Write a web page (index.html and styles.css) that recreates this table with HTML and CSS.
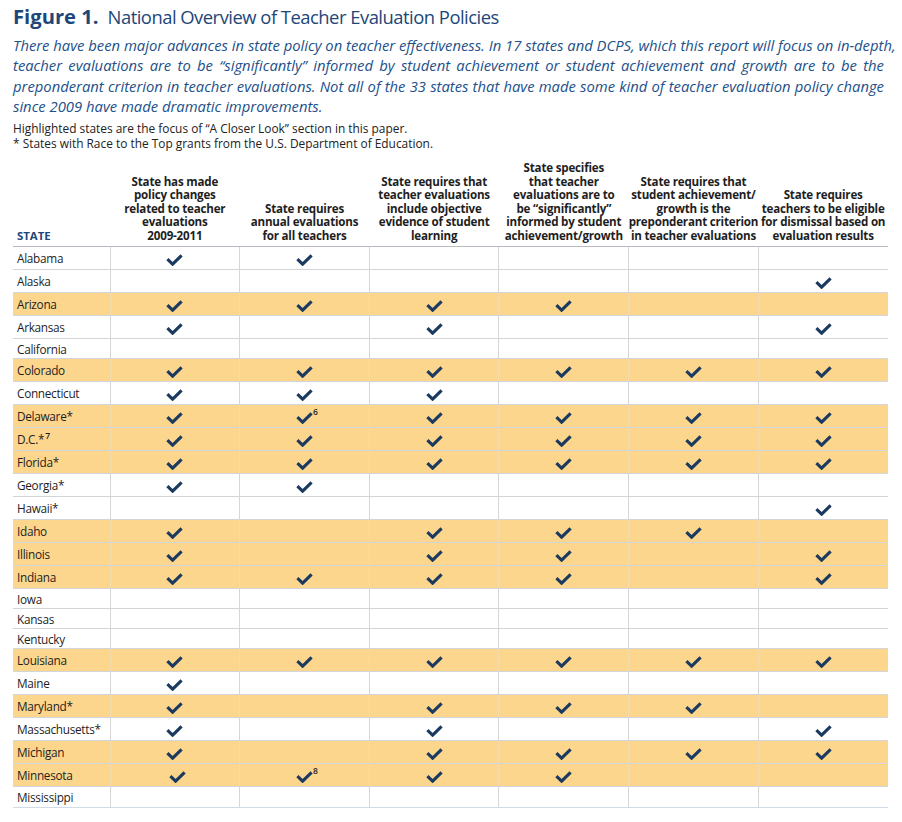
FILE: index.html
```html
<!DOCTYPE html>
<html lang="en">
<head>
<meta charset="utf-8">
<title>Figure 1. National Overview of Teacher Evaluation Policies</title>
<link rel="stylesheet" href="styles.css">
</head>
<body>
<svg class="defs" width="0" height="0" aria-hidden="true">
  <symbol id="ck" viewBox="0 0 17 12">
    <path d="M1.4 5.2 L6.6 10.2 L15.6 1.4" fill="none" stroke="#1b3a60" stroke-width="3.1" stroke-linejoin="miter"/>
  </symbol>
</svg>
<div class="page">
  <h1 class="title"><span class="fig">Figure 1.</span><span class="name">National Overview of Teacher Evaluation Policies</span></h1>
  <div class="lead">
    <span class="ln">There have been major advances in state policy on teacher effectiveness. In 17 states and DCPS, which this report will focus on in-depth,</span>
    <span class="ln">teacher evaluations are to be “significantly” informed by student achievement or student achievement and growth are to be the</span>
    <span class="ln">preponderant criterion in teacher evaluations. Not all of the 33 states that have made some kind of teacher evaluation policy change</span>
    <span class="ln last">since 2009 have made dramatic improvements.</span>
  </div>
  <div class="notes">
    <div>Highlighted states are the focus of “A Closer Look” section in this paper.</div>
    <div>* States with Race to the Top grants from the U.S. Department of Education.</div>
  </div>
  <table class="grid">
    <colgroup>
      <col class="c-state"><col class="c-q"><col class="c-q"><col class="c-q"><col class="c-q"><col class="c-q"><col class="c-q">
    </colgroup>
    <thead>
      <tr>
        <th class="st">STATE</th>
        <th>State has made<br>policy changes<br>related to teacher<br>evaluations<br>2009-2011</th>
        <th>State requires<br>annual evaluations<br>for all teachers</th>
        <th>State requires that<br>teacher evaluations<br>include objective<br>evidence of student<br>learning</th>
        <th>State specifies<br>that teacher<br>evaluations are to<br>be “significantly”<br>informed by student<br>achievement/growth</th>
        <th>State requires that<br>student achievement/<br>growth is the<br>preponderant criterion<br>in teacher evaluations</th>
        <th>State requires<br>teachers to be eligible<br>for dismissal based on<br>evaluation results</th>
      </tr>
    </thead>
    <tbody>
      <tr><td>Alabama</td><td><svg class="ck"><use href="#ck"/></svg></td><td><svg class="ck"><use href="#ck"/></svg></td><td></td><td></td><td></td><td></td></tr>
      <tr><td>Alaska</td><td></td><td></td><td></td><td></td><td></td><td><svg class="ck"><use href="#ck"/></svg></td></tr>
      <tr class="hl"><td>Arizona</td><td><svg class="ck"><use href="#ck"/></svg></td><td><svg class="ck"><use href="#ck"/></svg></td><td><svg class="ck"><use href="#ck"/></svg></td><td><svg class="ck"><use href="#ck"/></svg></td><td></td><td></td></tr>
      <tr><td>Arkansas</td><td><svg class="ck"><use href="#ck"/></svg></td><td></td><td><svg class="ck"><use href="#ck"/></svg></td><td></td><td></td><td><svg class="ck"><use href="#ck"/></svg></td></tr>
      <tr class="e"><td>California</td><td></td><td></td><td></td><td></td><td></td><td></td></tr>
      <tr class="hl"><td>Colorado</td><td><svg class="ck"><use href="#ck"/></svg></td><td><svg class="ck"><use href="#ck"/></svg></td><td><svg class="ck"><use href="#ck"/></svg></td><td><svg class="ck"><use href="#ck"/></svg></td><td><svg class="ck"><use href="#ck"/></svg></td><td><svg class="ck"><use href="#ck"/></svg></td></tr>
      <tr><td>Connecticut</td><td><svg class="ck"><use href="#ck"/></svg></td><td><svg class="ck"><use href="#ck"/></svg></td><td><svg class="ck"><use href="#ck"/></svg></td><td></td><td></td><td></td></tr>
      <tr class="hl"><td>Delaware*</td><td><svg class="ck"><use href="#ck"/></svg></td><td><svg class="ck"><use href="#ck"/></svg><sup class="fn">6</sup></td><td><svg class="ck"><use href="#ck"/></svg></td><td><svg class="ck"><use href="#ck"/></svg></td><td><svg class="ck"><use href="#ck"/></svg></td><td><svg class="ck"><use href="#ck"/></svg></td></tr>
      <tr class="hl"><td>D.C.*<sup class="fn-st">7</sup></td><td><svg class="ck"><use href="#ck"/></svg></td><td><svg class="ck"><use href="#ck"/></svg></td><td><svg class="ck"><use href="#ck"/></svg></td><td><svg class="ck"><use href="#ck"/></svg></td><td><svg class="ck"><use href="#ck"/></svg></td><td><svg class="ck"><use href="#ck"/></svg></td></tr>
      <tr class="hl"><td>Florida*</td><td><svg class="ck"><use href="#ck"/></svg></td><td><svg class="ck"><use href="#ck"/></svg></td><td><svg class="ck"><use href="#ck"/></svg></td><td><svg class="ck"><use href="#ck"/></svg></td><td><svg class="ck"><use href="#ck"/></svg></td><td><svg class="ck"><use href="#ck"/></svg></td></tr>
      <tr><td>Georgia*</td><td><svg class="ck"><use href="#ck"/></svg></td><td><svg class="ck"><use href="#ck"/></svg></td><td></td><td></td><td></td><td></td></tr>
      <tr><td>Hawaii*</td><td></td><td></td><td></td><td></td><td></td><td><svg class="ck"><use href="#ck"/></svg></td></tr>
      <tr class="hl"><td>Idaho</td><td><svg class="ck"><use href="#ck"/></svg></td><td></td><td><svg class="ck"><use href="#ck"/></svg></td><td><svg class="ck"><use href="#ck"/></svg></td><td><svg class="ck"><use href="#ck"/></svg></td><td></td></tr>
      <tr class="hl"><td>Illinois</td><td><svg class="ck"><use href="#ck"/></svg></td><td></td><td><svg class="ck"><use href="#ck"/></svg></td><td><svg class="ck"><use href="#ck"/></svg></td><td></td><td><svg class="ck"><use href="#ck"/></svg></td></tr>
      <tr class="hl"><td>Indiana</td><td><svg class="ck"><use href="#ck"/></svg></td><td><svg class="ck"><use href="#ck"/></svg></td><td><svg class="ck"><use href="#ck"/></svg></td><td><svg class="ck"><use href="#ck"/></svg></td><td></td><td><svg class="ck"><use href="#ck"/></svg></td></tr>
      <tr class="e"><td>Iowa</td><td></td><td></td><td></td><td></td><td></td><td></td></tr>
      <tr class="e"><td>Kansas</td><td></td><td></td><td></td><td></td><td></td><td></td></tr>
      <tr class="e"><td>Kentucky</td><td></td><td></td><td></td><td></td><td></td><td></td></tr>
      <tr class="hl"><td>Louisiana</td><td><svg class="ck"><use href="#ck"/></svg></td><td><svg class="ck"><use href="#ck"/></svg></td><td><svg class="ck"><use href="#ck"/></svg></td><td><svg class="ck"><use href="#ck"/></svg></td><td><svg class="ck"><use href="#ck"/></svg></td><td><svg class="ck"><use href="#ck"/></svg></td></tr>
      <tr><td>Maine</td><td><svg class="ck"><use href="#ck"/></svg></td><td></td><td></td><td></td><td></td><td></td></tr>
      <tr class="hl"><td>Maryland*</td><td><svg class="ck"><use href="#ck"/></svg></td><td></td><td><svg class="ck"><use href="#ck"/></svg></td><td><svg class="ck"><use href="#ck"/></svg></td><td><svg class="ck"><use href="#ck"/></svg></td><td></td></tr>
      <tr><td>Massachusetts*</td><td><svg class="ck"><use href="#ck"/></svg></td><td></td><td><svg class="ck"><use href="#ck"/></svg></td><td></td><td></td><td><svg class="ck"><use href="#ck"/></svg></td></tr>
      <tr class="hl"><td>Michigan</td><td><svg class="ck"><use href="#ck"/></svg></td><td></td><td><svg class="ck"><use href="#ck"/></svg></td><td><svg class="ck"><use href="#ck"/></svg></td><td><svg class="ck"><use href="#ck"/></svg></td><td><svg class="ck"><use href="#ck"/></svg></td></tr>
      <tr class="hl"><td>Minnesota</td><td class="shift"><svg class="ck"><use href="#ck"/></svg></td><td><svg class="ck"><use href="#ck"/></svg><sup class="fn">8</sup></td><td><svg class="ck"><use href="#ck"/></svg></td><td><svg class="ck"><use href="#ck"/></svg></td><td></td><td></td></tr>
      <tr class="e last"><td>Mississippi</td><td></td><td></td><td></td><td></td><td></td><td></td></tr>
    </tbody>
  </table>
</div>
</body>
</html>
```
FILE: styles.css
```css
html, body {
  margin: 0;
  padding: 0;
  background: #ffffff;
}

body {
  font-family: "Open Sans", "Liberation Sans", sans-serif;
  color: #1e1e1e;
}

.defs {
  position: absolute;
  width: 0;
  height: 0;
  overflow: hidden;
}

.page {
  padding: 4px 13px 0 13px;
}

.title {
  margin: 0;
  font-size: 18.4px;
  letter-spacing: -0.5px;
  line-height: 24px;
  font-weight: normal;
  color: #1d4679;
  white-space: nowrap;
}

.title .fig {
  font-weight: bold;
  font-size: 20.2px;
  letter-spacing: 0;
  margin-right: 9px;
}

.lead {
  margin-top: 6px;
  width: 871px;
  font-size: 14.8px;
  line-height: 20.33px;
  font-style: italic;
  color: #22508a;
}

.lead .ln {
  display: block;
  white-space: nowrap;
  text-align: justify;
  text-align-last: justify;
}

.lead .ln.last {
  text-align-last: left;
}

.notes {
  margin-top: 5px;
  font-size: 11.9px;
  line-height: 15px;
  color: #222222;
}

.grid {
  margin-top: 10px;
  width: 875px;
  table-layout: fixed;
  border-collapse: collapse;
}

.c-state {
  width: 97px;
}

.c-q {
  width: 129.66px;
}

.grid th {
  vertical-align: bottom;
  text-align: center;
  font-size: 11.6px;
  letter-spacing: -0.2px;
  line-height: 13.5px;
  font-weight: bold;
  color: #1e1e1e;
  padding: 0 0 4px 0;
  border-bottom: 1px solid #b8bcc2;
  white-space: nowrap;
}

.grid th.st {
  text-align: left;
  padding-left: 4px;
  color: #1d4679;
  font-size: 11.4px;
  letter-spacing: 0;
}

.grid td {
  height: 22px;
  padding: 0;
  text-align: center;
  vertical-align: middle;
  font-size: 11.8px;
  letter-spacing: -0.3px;
  color: #1e1e1e;
  border-bottom: 1px solid #d2d5da;
  border-left: 1px solid #d6d6d6;
}

.grid td:first-child {
  border-left: none;
  text-align: left;
  padding-left: 4px;
  white-space: nowrap;
}

.grid td.shift {
  padding-left: 6px;
}

.grid tr.e td {
  height: 19px;
}

.grid tr.last td {
  height: 20px;
  border-bottom-color: #cfdbe6;
}

.grid tr.hl td {
  background: #fdd68e;
  border-left-color: #f3dcae;
}

.ck {
  width: 17px;
  height: 12px;
  display: inline-block;
  vertical-align: middle;
  margin-top: 1px;
}

.fn {
  display: inline-block;
  width: 6px;
  margin-right: -6px;
  font-size: 8.5px;
  font-weight: 600;
  letter-spacing: 0;
  line-height: 0;
  vertical-align: 6px;
  text-align: left;
}

.fn-st {
  font-size: 8.5px;
  font-weight: 600;
  letter-spacing: 0;
  line-height: 0;
  vertical-align: 5px;
  margin-left: 1px;
}
```
